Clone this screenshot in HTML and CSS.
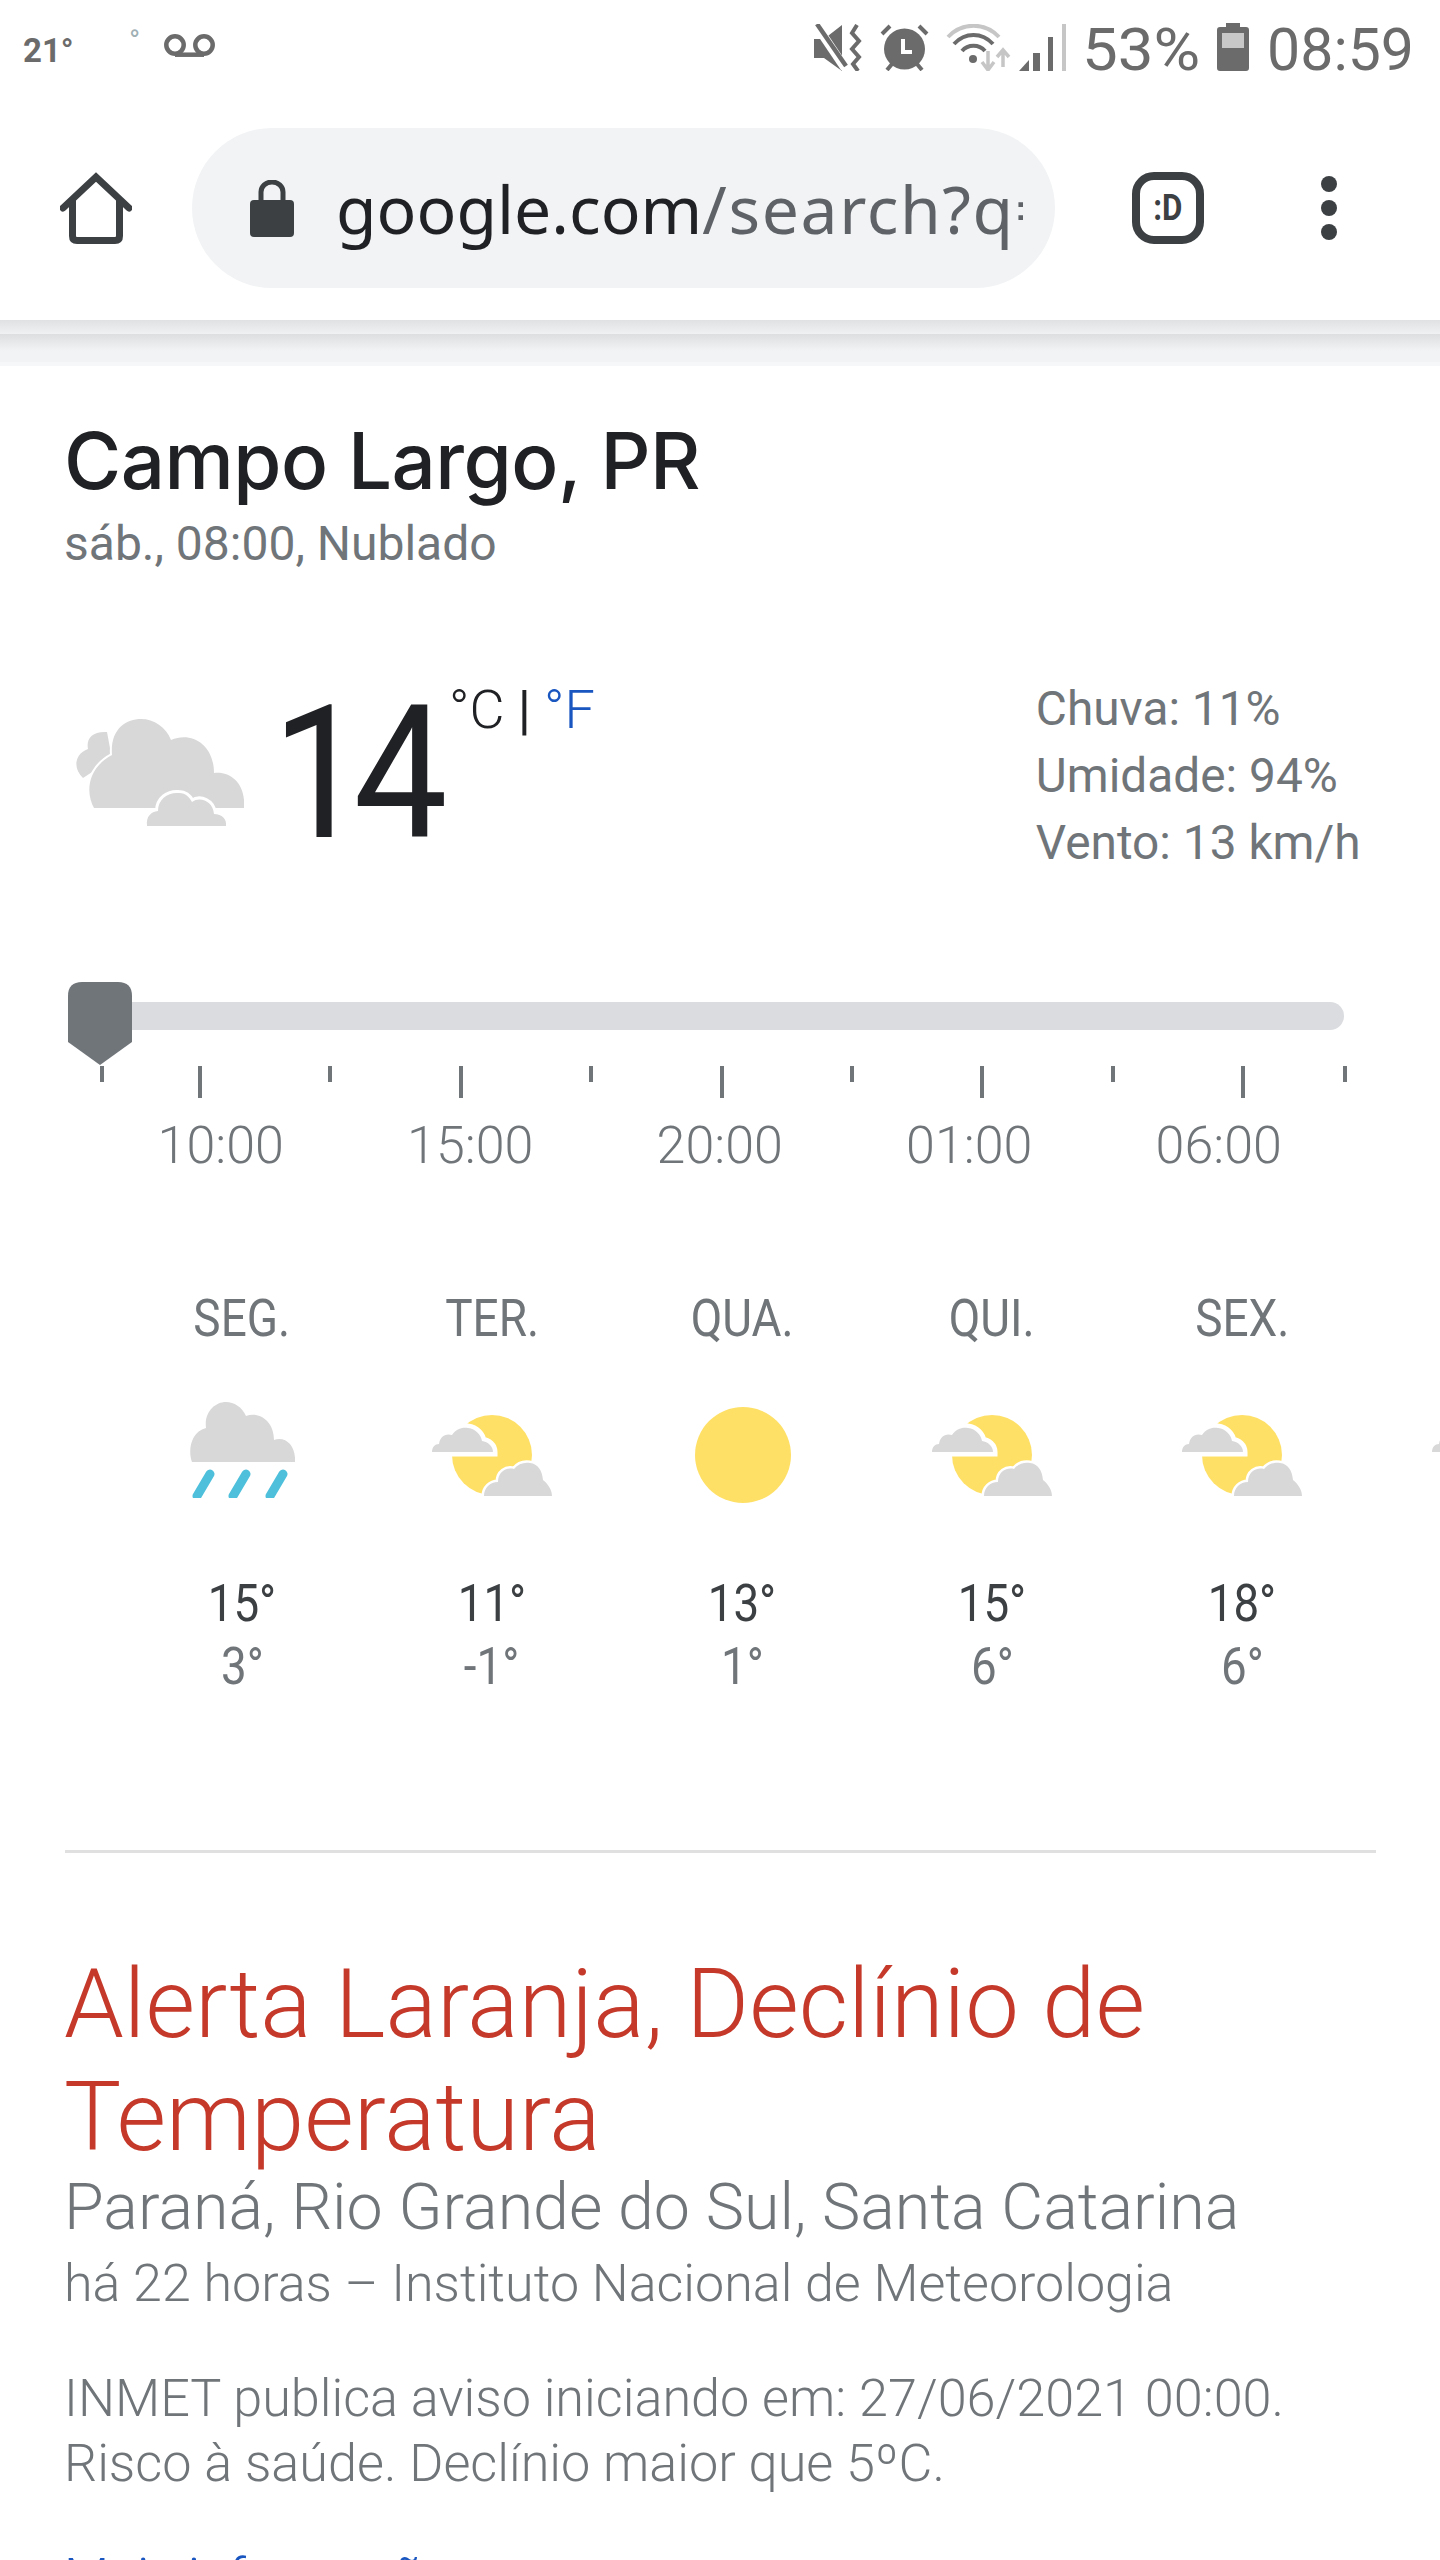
FILE: index.html
```html
<!DOCTYPE html>
<html lang="pt">
<head>
  <meta charset="utf-8">
  <title>Campo Largo, PR</title>
  <link rel="stylesheet" href="styles.css">
</head>
<body>
  <div class="status-bar">
    <span class="status-temp">21°</span>
    <span class="status-dot">°</span>
    <svg class="icon-voicemail" width="51" height="23" viewBox="0 0 51 23"><circle cx="11" cy="11" r="8.7" fill="none" stroke="#6b6b6b" stroke-width="4.5"/><circle cx="40" cy="11" r="8.7" fill="none" stroke="#6b6b6b" stroke-width="4.5"/><path d="M11 20.7H40" stroke="#6b6b6b" stroke-width="4.5"/></svg>
    <div class="status-right">
      <svg class="icon-mute" width="49" height="47" viewBox="0 0 49 47"><path d="M0 15H10L28 1V47L10 34H0Z" fill="#6b6b6b"/><path d="M2 1L31 44" stroke="#fff" stroke-width="9"/><path d="M3 0L32 42" stroke="#6b6b6b" stroke-width="4.5"/><path d="M43 1L38 9L45 17L38 25L45 33L39 40L44 47" fill="none" stroke="#6b6b6b" stroke-width="4"/></svg>
      <svg class="icon-alarm" width="49" height="47" viewBox="0 0 49 47"><circle cx="24.5" cy="25" r="20.5" fill="#6b6b6b"/><path d="M2 10L10 2M47 10L39 2M7 46L12 40M42 46L37 40" stroke="#6b6b6b" stroke-width="4"/><path d="M23 15V28H32" fill="none" stroke="#fff" stroke-width="4"/></svg>
      <svg class="icon-wifi" width="73" height="47" viewBox="0 0 73 47"><path d="M2 13C16 -2 39 -2 53 13" fill="none" stroke="#c6c6c6" stroke-width="4"/><path d="M8 20C19 8 36 8 47 20" fill="none" stroke="#6b6b6b" stroke-width="4"/><path d="M16 27C22 20 33 20 39 27" fill="none" stroke="#6b6b6b" stroke-width="4"/><circle cx="27" cy="35" r="4" fill="#6b6b6b"/><path d="M42 27V43M36 38L42 46L48 38" fill="none" stroke="#c6c6c6" stroke-width="3.5"/><path d="M57 43V28M51 33L57 26L63 33" fill="none" stroke="#c6c6c6" stroke-width="3.5"/></svg>
      <svg class="icon-signal" width="47" height="47" viewBox="0 0 47 47"><path d="M0 47L10 36V47Z" fill="#6b6b6b"/><path d="M14 29H21V47H14ZM29 13H34V47H29Z" fill="#6b6b6b"/><path d="M43 0H47V47H43Z" fill="#c6c6c6"/></svg>
      <span class="status-text status-battery">53%</span>
      <svg class="icon-battery" width="32" height="48" viewBox="0 0 32 48"><path d="M9 0H23V4H29Q32 4 32 7V45Q32 48 29 48H3Q0 48 0 45V7Q0 4 3 4H9Z" fill="#6b6b6b"/><rect x="5" y="10" width="22" height="15" fill="#c8c8c8"/></svg>
      <span class="status-text status-time">08:59</span>
    </div>
  </div>

  <div class="toolbar">
    <svg class="icon-home" width="72" height="72" viewBox="0 0 72 72"><path d="M3 36L36 5L69 36" fill="none" stroke="#3c4043" stroke-width="7" stroke-linecap="round" stroke-linejoin="miter"/><path d="M12.5 28V64Q12.5 68.500 17 68.500H55Q59.500 68.500 59.500 64V28" fill="none" stroke="#3c4043" stroke-width="7"/></svg>
    <div class="url-pill">
      <svg class="icon-lock" width="44" height="57" viewBox="0 0 44 57"><rect x="0" y="20" width="44" height="37" rx="4" fill="#3c4043"/><path d="M11 21V12A11 10 0 0 1 33 12V21" fill="none" stroke="#3c4043" stroke-width="5"/></svg>
      <div class="url-text"><span class="url-domain">google.com</span><span class="url-path">/search?q=</span></div>
    </div>
    <div class="tab-count"><span class="tab-face">:D</span></div>
    <div class="menu-dots"><i></i><i></i><i></i></div>
  </div>
  <div class="shade-top"></div>
  <div class="shade-mid"></div>
  <div class="shade-low"></div>

  <div class="weather">
    <h1 class="place">Campo Largo, PR</h1>
    <div class="place-sub">sáb., 08:00, Nublado</div>

    <div class="now">
      <svg class="now-icon" width="168" height="108" viewBox="0 0 168 108">
        <path d="M7 59C-3 50 -2 35 12 30C10 20 16 12 31 13L36 40Z" fill="#d8d8d8"/>
        <path d="M18 89C10 75 10 50 36 36C34 10 50 0 65 0C78 0 90 8 95 21C115 12 138 25 138 54C155 52 170 65 168 89Z" fill="#d8d8d8" stroke="#fff" stroke-width="4" paint-order="stroke"/>
        <path d="M71 107C70 97 75 93 82 92C82 80 92 73 103 74C110 74 114 79 116 83C124 77 137 82 138 95C146 95 151 100 150 107Z" fill="#d8d8d8" stroke="#fff" stroke-width="6" paint-order="stroke"/>
      </svg>
      <div class="now-temp">14</div>
      <div class="now-units">°C <span class="unit-sep">|</span> <span class="unit-link">°F</span></div>
      <div class="now-details">
        <div>Chuva: 11%</div>
        <div>Umidade: 94%</div>
        <div>Vento: 13 km/h</div>
      </div>
    </div>

    <div class="slider">
      <div class="slider-track"></div>
      <svg class="slider-thumb" width="64" height="83" viewBox="0 0 64 83"><path d="M14 0H50Q64 0 64 14V60L32 83L0 60V14Q0 0 14 0Z" fill="#70757a"/></svg>
    </div>
    <div class="ticks">
      <i class="tick tick-start"></i>
      <i class="tick tick-long tick-second"></i>
      <i class="tick"></i>
      <i class="tick tick-long"></i>
      <i class="tick"></i>
      <i class="tick tick-long"></i>
      <i class="tick"></i>
      <i class="tick tick-long"></i>
      <i class="tick"></i>
      <i class="tick tick-long"></i>
      <i class="tick tick-end"></i>
    </div>
    <div class="hours">
      <span>10:00</span><span>15:00</span><span>20:00</span><span>01:00</span><span>06:00</span>
    </div>

    <div class="forecast">
      <div class="day">
        <div class="day-name"><span>SEG.</span></div>
        <div class="day-icon">
          <svg class="icon-rain" width="105" height="96" viewBox="0 0 105 96"><path d="M2 60C-2 50 0 30 16 26C14 10 25 0 36 0C44 0 52 5 56 14C68 9 84 18 84 38C96 34 106 44 105 60Z" fill="#d8d8d8"/><path d="M20 72L7 94M56 72L43 94M93 72L80 94" stroke="#4fc0dc" stroke-width="9" stroke-linecap="round"/></svg>
        </div>
        <div class="day-high"><span>15°</span></div>
        <div class="day-low"><span>3°</span></div>
      </div>
      <div class="day">
        <div class="day-name"><span>TER.</span></div>
        <div class="day-icon">
          <svg width="120" height="82" viewBox="0 0 120 82"><circle cx="60" cy="41" r="40" fill="#ffe066"/><path d="M0 38C0 33 3 30 7 30C8 23 13 19 20 21C24 15 30 13 36 14C44 15 49 21 50 27C56 28 61 32 61 38Z" fill="#d8d8d8" stroke="#fff" stroke-width="9" paint-order="stroke"/><path d="M52 82C52 74 58 68 66 68C66 58 74 53 82 55C86 50 92 48 98 49C106 50 110 56 111 66C116 70 120 76 120 82Z" fill="#d8d8d8" stroke="#fff" stroke-width="5" paint-order="stroke"/></svg>
        </div>
        <div class="day-high"><span>11°</span></div>
        <div class="day-low"><span>-1°</span></div>
      </div>
      <div class="day">
        <div class="day-name"><span>QUA.</span></div>
        <div class="day-icon">
          <svg class="icon-sun" width="96" height="96" viewBox="0 0 96 96"><circle cx="48" cy="48" r="48" fill="#ffe066"/></svg>
        </div>
        <div class="day-high"><span>13°</span></div>
        <div class="day-low"><span>1°</span></div>
      </div>
      <div class="day">
        <div class="day-name"><span>QUI.</span></div>
        <div class="day-icon">
          <svg width="120" height="82" viewBox="0 0 120 82"><circle cx="60" cy="41" r="40" fill="#ffe066"/><path d="M0 38C0 33 3 30 7 30C8 23 13 19 20 21C24 15 30 13 36 14C44 15 49 21 50 27C56 28 61 32 61 38Z" fill="#d8d8d8" stroke="#fff" stroke-width="9" paint-order="stroke"/><path d="M52 82C52 74 58 68 66 68C66 58 74 53 82 55C86 50 92 48 98 49C106 50 110 56 111 66C116 70 120 76 120 82Z" fill="#d8d8d8" stroke="#fff" stroke-width="5" paint-order="stroke"/></svg>
        </div>
        <div class="day-high"><span>15°</span></div>
        <div class="day-low"><span>6°</span></div>
      </div>
      <div class="day">
        <div class="day-name"><span>SEX.</span></div>
        <div class="day-icon">
          <svg width="120" height="82" viewBox="0 0 120 82"><circle cx="60" cy="41" r="40" fill="#ffe066"/><path d="M0 38C0 33 3 30 7 30C8 23 13 19 20 21C24 15 30 13 36 14C44 15 49 21 50 27C56 28 61 32 61 38Z" fill="#d8d8d8" stroke="#fff" stroke-width="9" paint-order="stroke"/><path d="M52 82C52 74 58 68 66 68C66 58 74 53 82 55C86 50 92 48 98 49C106 50 110 56 111 66C116 70 120 76 120 82Z" fill="#d8d8d8" stroke="#fff" stroke-width="5" paint-order="stroke"/></svg>
        </div>
        <div class="day-high"><span>18°</span></div>
        <div class="day-low"><span>6°</span></div>
      </div>
      <div class="day">
        <div class="day-icon day-icon-next">
          <svg width="120" height="82" viewBox="0 0 120 82"><circle cx="60" cy="41" r="40" fill="#ffe066"/><path d="M0 38C0 33 3 30 7 30C8 23 13 19 20 21C24 15 30 13 36 14C44 15 49 21 50 27C56 28 61 32 61 38Z" fill="#d8d8d8" stroke="#fff" stroke-width="9" paint-order="stroke"/></svg>
        </div>
      </div>
    </div>

    <div class="divider"></div>

    <div class="alert">
      <h2 class="alert-title">Alerta Laranja, Declínio de Temperatura</h2>
      <div class="alert-region">Paraná, Rio Grande do Sul, Santa Catarina</div>
      <div class="alert-source">há 22 horas – Instituto Nacional de Meteorologia</div>
      <p class="alert-body">INMET publica aviso iniciando em: 27/06/2021 00:00.<br>Risco à saúde. Declínio maior que 5ºC.</p>
      <a class="alert-link" href="#">Mais informações</a>
    </div>
  </div>
</body>
</html>
```

FILE: styles.css
```css
html, body {
  margin: 0;
  padding: 0;
}

body {
  width: 1440px;
  height: 2560px;
  overflow: hidden;
  background-color: #fff;
  font-family: Roboto, sans-serif;
  color: #202124;
}

svg {
  display: block;
  flex-shrink: 0;
}

/* status bar */
.status-bar {
  display: flex;
  align-items: flex-start;
  height: 96px;
  padding: 24px 26px 0 23px;
  box-sizing: border-box;
  color: #6b6b6b;
}

.status-temp {
  font-size: 33px;
  line-height: 40px;
  font-weight: 700;
  margin-top: 7px;
  width: 52px;
}

.status-dot {
  font-size: 30px;
  line-height: 30px;
  color: #a0b0b5;
  margin: 2px 0 0 54px;
  width: 20px;
}

.icon-voicemail {
  margin: 10px 0 0 15px;
}

.status-right {
  display: flex;
  align-items: flex-start;
  margin-left: auto;
}

.icon-alarm,
.icon-wifi {
  margin-left: 17px;
}

.status-text {
  font-size: 59px;
  line-height: 58px;
  font-weight: 400;
  margin-top: -3px;
}

.status-battery {
  margin-left: 16px;
  transform: scaleX(1.08);
  transform-origin: left;
}

.icon-battery {
  margin: -1px 0 0 26px;
}

.status-time {
  margin-left: 18px;
}

/* browser toolbar */
.toolbar {
  display: flex;
  align-items: center;
  height: 224px;
}

.icon-home {
  margin-left: 60px;
}

.url-pill {
  display: flex;
  align-items: center;
  width: 863px;
  height: 160px;
  margin-left: 60px;
  padding-left: 58px;
  box-sizing: border-box;
  background-color: #f1f3f4;
  border-radius: 80px;
}

.url-text {
  width: 687px;
  margin-left: 42px;
  overflow: hidden;
  white-space: nowrap;
  font-family: "Noto Sans", sans-serif;
  font-size: 66px;
  line-height: 90px;
  color: #5f6368;
}

.url-domain {
  color: #202124;
}

.url-path {
  letter-spacing: 1.600px;
}

.tab-count {
  display: flex;
  align-items: center;
  justify-content: center;
  width: 72px;
  height: 72px;
  margin-left: 77px;
  box-sizing: border-box;
  border: 8px solid #3c4043;
  border-radius: 22px;
}

.tab-face {
  font-size: 36px;
  font-weight: 700;
  line-height: 36px;
  color: #3c4043;
  transform: scaleX(0.87);
}

.menu-dots {
  display: flex;
  flex-direction: column;
  gap: 8px;
  margin-left: 117px;
}

.menu-dots i {
  display: block;
  width: 16px;
  height: 16px;
  border-radius: 50%;
  background-color: #3c4043;
}

.shade-top {
  height: 14px;
  background: linear-gradient(#dfe1e3, #f0f1f3);
}

.shade-mid {
  height: 28px;
  background: linear-gradient(#dcdee0, #f1f3f4 60%);
}

.shade-low {
  height: 4px;
  background-color: #f6f7f8;
}

/* weather card */
.weather {
  padding: 55px 0 0 65px;
}

.place {
  margin: 0 0 0 -1px;
  font-family: Inter, sans-serif;
  font-size: 78px;
  line-height: 80px;
  font-weight: 500;
  letter-spacing: -0.500px;
  color: #202124;
}

.place-sub {
  margin: 15px 0 0 -1px;
  font-size: 48px;
  line-height: 56px;
  color: #70757a;
}

.now {
  display: flex;
  align-items: flex-start;
  height: 302px;
  margin-top: 108px;
}

.now-icon {
  margin: 39px 0 0 11px;
}

.now-temp {
  width: 164px;
  margin-left: 28px;
  font-size: 186px;
  line-height: 186px;
  font-weight: 400;
  letter-spacing: -14px;
  transform: scaleX(0.9);
  transform-origin: left;
}

.now-units {
  margin-left: 13px;
  font-size: 54px;
  line-height: 60px;
  font-weight: 300;
  white-space: nowrap;
}

.unit-sep {
  font-weight: 400;
}

.unit-link {
  color: #1a56c0;
}

.now-details {
  margin: -4px 0 0 441px;
  font-size: 47.800px;
  line-height: 67px;
  color: #70757a;
  white-space: nowrap;
}

/* time slider */
.slider {
  position: relative;
  width: 1279px;
  height: 84px;
}

.slider-track {
  position: absolute;
  top: 20px;
  left: 3px;
  right: 0;
  height: 28px;
  background-color: #dadce0;
  border-radius: 14px;
}

.slider-thumb {
  position: absolute;
  top: 0;
  left: 3px;
}

.ticks {
  display: flex;
  align-items: flex-start;
  height: 32px;
}

.tick {
  display: block;
  width: 4px;
  height: 16px;
  margin-left: 126.400px;
  background-color: #70757a;
}

.tick-long {
  height: 32px;
}

.tick-start {
  margin-left: 35px;
}

.tick-second {
  margin-left: 94px;
}

.tick-end {
  margin-left: 98px;
}

.hours {
  display: flex;
  margin: 18px 0 0 31px;
  font-size: 52px;
  line-height: 60px;
  font-weight: 300;
  color: #70757a;
}

.hours span {
  width: 249.500px;
  text-align: center;
}

/* daily forecast */
.forecast {
  display: flex;
  height: 561px;
  margin: 113px 0 0 52px;
  width: 1323px;
}

.day {
  flex: 0 0 250px;
  text-align: center;
}

.day-name {
  font-size: 51px;
  line-height: 60px;
  color: #70757a;
  margin-bottom: 51px;
}

.day-name span {
  display: inline-block;
  transform: scaleX(0.9);
}

.day-high span,
.day-low span {
  display: inline-block;
  transform: scaleX(0.88);
}

.day-icon {
  display: flex;
  align-items: center;
  justify-content: center;
  height: 110px;
  margin-bottom: 62px;
}

.icon-rain {
  margin-top: -11px;
}

.icon-sun {
  margin-left: 1px;
}

.day-icon-next {
  margin-top: 111px;
  width: 120px;
  margin-left: 65px;
}

.day-high {
  font-size: 52px;
  line-height: 63px;
  color: #3c4043;
}

.day-low {
  font-size: 52px;
  line-height: 63px;
  color: #70757a;
}

.divider {
  width: 1311px;
  height: 3px;
  background-color: #e0e0e0;
}

/* alert */
.alert {
  margin-left: -1px;
}

.alert-title {
  margin: 95px 0 0;
  width: 1240px;
  font-size: 95.800px;
  line-height: 113px;
  font-weight: 300;
  color: #c5392b;
}

.alert-region {
  margin-top: -3px;
  font-size: 64.500px;
  line-height: 72px;
  font-weight: 300;
  color: #70757a;
}

.alert-source {
  margin-top: 11px;
  font-size: 52px;
  line-height: 60px;
  font-weight: 300;
  color: #70757a;
}

.alert-body {
  margin: 52px 0 0;
  font-size: 52.200px;
  line-height: 65px;
  font-weight: 300;
  color: #70757a;
}

.alert-link {
  display: block;
  margin-top: 49px;
  font-size: 52.200px;
  line-height: 65px;
  font-weight: 300;
  color: #1a56c0;
  text-decoration: none;
}
```
